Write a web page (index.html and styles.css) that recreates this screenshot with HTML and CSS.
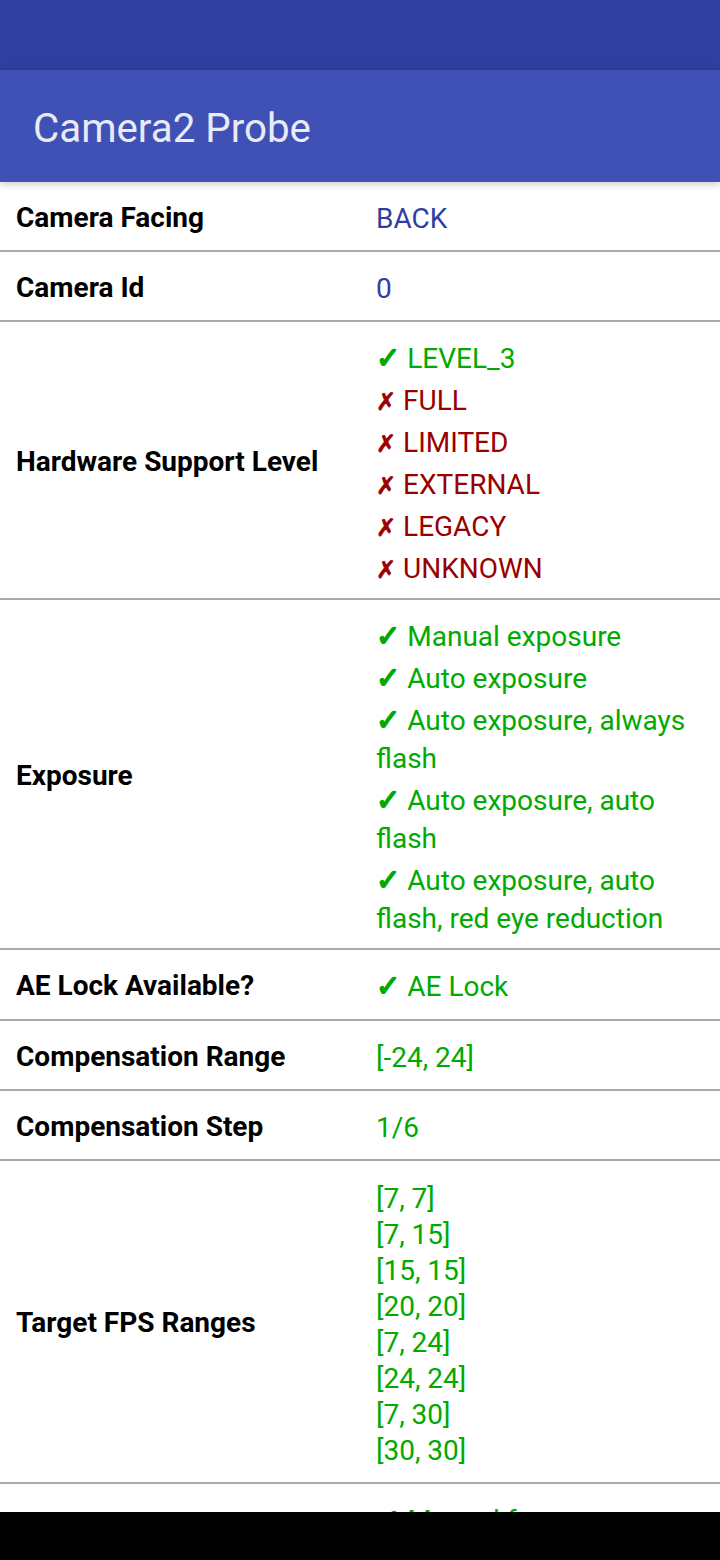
FILE: index.html
```html
<!DOCTYPE html>
<html>
<head>
<meta charset="utf-8">
<link rel="stylesheet" href="styles.css">
</head>
<body>
<div class="screen">
  <div class="status-bar"></div>
  <header class="app-bar"><h1 class="title">Camera2 Probe</h1></header>
  <main class="list">
    <div class="row">
      <div class="label">Camera Facing</div>
      <div class="value single info">BACK</div>
    </div>
    <div class="row">
      <div class="label">Camera Id</div>
      <div class="value single info">0</div>
    </div>
    <div class="row">
      <div class="label">Hardware Support Level</div>
      <div class="value items">
        <div class="item ok"><span class="mark">✓</span> LEVEL_3</div>
        <div class="item no"><span class="cross">✗</span> FULL</div>
        <div class="item no"><span class="cross">✗</span> LIMITED</div>
        <div class="item no"><span class="cross">✗</span> EXTERNAL</div>
        <div class="item no"><span class="cross">✗</span> LEGACY</div>
        <div class="item no"><span class="cross">✗</span> UNKNOWN</div>
      </div>
    </div>
    <div class="row">
      <div class="label">Exposure</div>
      <div class="value items">
        <div class="item ok"><span class="mark">✓</span> Manual exposure</div>
        <div class="item ok"><span class="mark">✓</span> Auto exposure</div>
        <div class="item ok"><span class="mark">✓</span> Auto exposure, always flash</div>
        <div class="item ok"><span class="mark">✓</span> Auto exposure, auto flash</div>
        <div class="item ok"><span class="mark">✓</span> Auto exposure, auto flash, red eye reduction</div>
      </div>
    </div>
    <div class="row">
      <div class="label">AE Lock Available?</div>
      <div class="value single tall ok"><span class="mark">✓</span> AE Lock</div>
    </div>
    <div class="row">
      <div class="label">Compensation Range</div>
      <div class="value single ok">[-24, 24]</div>
    </div>
    <div class="row">
      <div class="label">Compensation Step</div>
      <div class="value single ok">1/6</div>
    </div>
    <div class="row">
      <div class="label">Target FPS Ranges</div>
      <div class="value ranges ok">
        <div>[7, 7]</div>
        <div>[7, 15]</div>
        <div>[15, 15]</div>
        <div>[20, 20]</div>
        <div>[7, 24]</div>
        <div>[24, 24]</div>
        <div>[7, 30]</div>
        <div>[30, 30]</div>
      </div>
    </div>
    <div class="row">
      <div class="label">Focus</div>
      <div class="value items">
        <div class="item ok"><span class="mark">✓</span> Manual focus</div>
        <div class="item ok"><span class="mark">✓</span> Auto focus</div>
        <div class="item ok"><span class="mark">✓</span> Continuous picture</div>
        <div class="item ok"><span class="mark">✓</span> Continuous video</div>
      </div>
    </div>
  </main>
  <div class="nav-bar"></div>
</div>
</body>
</html>
```
FILE: styles.css
```css
* { box-sizing: border-box; }
html, body {
  margin: 0;
  padding: 0;
  background: #fff;
}
body {
  font-family: Roboto, "DejaVu Sans", sans-serif;
}
.screen {
  width: 720px;
  height: 1560px;
  display: flex;
  flex-direction: column;
  overflow: hidden;
}
.status-bar {
  height: 70px;
  flex: none;
  background: #303f9f;
}
.app-bar {
  height: 112px;
  flex: none;
  background: #3f51b5;
  display: flex;
  align-items: center;
  padding-left: 33px;
  position: relative;
  z-index: 2;
  box-shadow: 0 2px 8px rgba(0, 0, 0, 0.22);
}
.title {
  margin: 0;
  font-weight: 400;
  font-size: 40.3px;
  color: #e8eaf6;
  padding-top: 4px;
}
.list {
  flex: 1;
  overflow: hidden;
  background: #fff;
}
.row {
  display: grid;
  grid-template-columns: 360px 1fr;
  align-items: center;
  border-bottom: 2px solid #aaaaaa;
}
.label {
  padding-left: 16px;
  padding-top: 2px;
  font-weight: 700;
  font-size: 28px;
  color: #000;
}
.value {
  padding: 0 16px;
  font-size: 28px;
}
.mark {
  font-family: "DejaVu Sans", sans-serif;
  font-size: 29px;
  line-height: 1;
  -webkit-text-stroke: 1.6px currentColor;
}
.cross {
  font-family: "DejaVu Sans", sans-serif;
  font-size: 24px;
  line-height: 1;
  -webkit-text-stroke: 0.7px currentColor;
}
.single {
  padding-top: 19px;
  padding-bottom: 13px;
  line-height: 36px;
}
.tall {
  padding-bottom: 14px;
}
.info { color: #303f9f; }
.ok { color: #00aa00; }
.no { color: #990000; }
.items {
  display: flex;
  flex-direction: column;
  gap: 4px;
  padding-top: 18px;
  padding-bottom: 10px;
  line-height: 38px;
}
.ranges {
  padding-top: 20px;
  padding-bottom: 13px;
  line-height: 36px;
}
.nav-bar {
  height: 48px;
  flex: none;
  background: #000;
}
```
